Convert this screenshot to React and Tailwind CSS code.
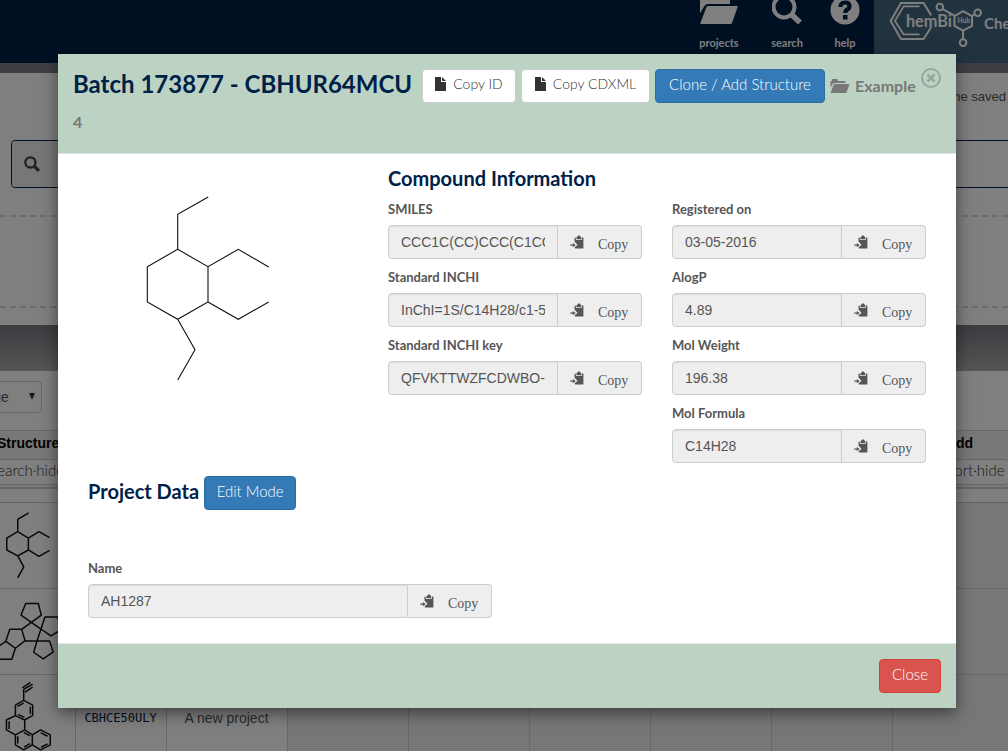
import React from "react";

const brandFont = "font-['Lato','Open_Sans',sans-serif]";
const bodyFont = "font-['Liberation_Sans',Arial,sans-serif]";

function FolderIcon({ className }) {
  return (
    <svg viewBox="0 0 38 28" className={className} fill="currentColor" aria-hidden="true">
      <path d="M0 17 V4 H3 V1.500 Q3 0 4.500 0 H13 Q14.500 0 14.500 1.500 V4 H30 V8 H8 Q5.500 8 4.500 10 Z" />
      <path d="M8.500 10 H37 Q38 10 37.700 11 L32 27 Q31.600 28 30.500 28 H1 Q0 28 0.400 27 L6.500 11 Q7 10 8.500 10 Z" />
    </svg>
  );
}

function FileIcon() {
  return (
    <svg viewBox="0 0 12 14" className="h-3.5 w-3 shrink-0" fill="currentColor" aria-hidden="true">
      <path d="M0 0 H6 V5 H11 V14 H0 Z" />
      <path d="M7 0 L11 4 H7 Z" />
    </svg>
  );
}

function PasteIcon() {
  return (
    <svg viewBox="0 0 14 14" className="h-3.5 w-3.5 shrink-0" fill="currentColor" aria-hidden="true">
      <path d="M7.500 1.500 Q9 -0.800 10 1 L11.300 2.200 L11 4.300 L6.500 4.300 L6.300 2.600 Z" />
      <path d="M4.500 2.800 L5.600 2.600 L6 5 H11.600 L12 2.400 H13.400 V13.400 H5.200 L4.500 12.300 L7.600 9.900 L4.500 6.400 Z" />
      <path d="M0.300 9.500 H2.800 V7.900 L5.700 10.100 L2.800 12.300 V10.700 H0.300 Z" />
    </svg>
  );
}

function SearchIcon({ className }) {
  return (
    <svg viewBox="0 0 30 30" className={className} fill="none" stroke="currentColor" aria-hidden="true">
      <circle cx="12" cy="12" r="9.500" strokeWidth="4.500" />
      <path d="M19 19 L28 28" strokeWidth="6" />
    </svg>
  );
}

function NavItem({ label, width, children }) {
  return (
    <a href="#" className={`flex flex-col items-center ${width}`}>
      <span className="flex h-9 items-start">{children}</span>
      <span className="text-[11px] leading-[14px] font-bold">{label}</span>
    </a>
  );
}

function Logo() {
  return (
    <svg viewBox="682 0 292 144" className="h-12 w-[97px] shrink-0" fill="none" stroke="white" strokeWidth="6" role="img" aria-label="ChemBio Hub">
      <path d="M815 46 L792 9 H724 L693 63 L724 117 H792 L815 82" />
      <path d="M780 19 H732 L706 63 L732 103 H780" strokeWidth="5" />
      <path d="M911 33 L938 48 V78 L911 92 L885 78 V48 Z" />
      <circle cx="841" cy="21" r="10" />
      <circle cx="955" cy="38" r="10" />
      <circle cx="911" cy="128" r="10" />
      <path d="M850 27 L885 47 M946 43 L938 48 M911 92 V118" />
      <g fill="white" stroke="none" className="font-['Lato',sans-serif] font-bold">
        <text x="739" y="80" fontSize="49">hemBi</text>
        <text x="894" y="70" fontSize="20">Hub</text>
      </g>
    </svg>
  );
}

function TopBar() {
  return (
    <header className={`flex h-[63px] justify-end bg-[#002147] text-white ${brandFont}`}>
      <nav className="flex">
        <NavItem label="projects" width="w-[68px]">
          <svg viewBox="0 0 38 24" className="h-6 w-[38px]" fill="currentColor" aria-hidden="true">
            <path d="M0 13 V0 H30 V4 H8 Q5.500 4 4.500 6 Z" />
            <path d="M8.500 6 H37 Q38 6 37.700 7 L32 23 Q31.600 24 30.500 24 H1 Q0 24 0.400 23 L6.500 7 Q7 6 8.500 6 Z" />
          </svg>
        </NavItem>
        <NavItem label="search" width="w-[68px]">
          <svg viewBox="0 5 30 25" className="h-[25px] w-[30px]" fill="none" stroke="currentColor" aria-hidden="true">
            <circle cx="12" cy="12" r="10.500" strokeWidth="4" />
            <path d="M19.500 19.500 L28 27.500" strokeWidth="5.500" />
          </svg>
        </NavItem>
        <NavItem label="help" width="w-[48px]">
          <svg viewBox="0 5 30 25" className="h-[25px] w-[30px]" aria-hidden="true">
            <circle cx="15" cy="15" r="14.500" fill="currentColor" />
            <path d="M10.500 12 Q10.500 7.500 15.200 7.500 Q19.500 7.500 19.500 11.200 Q19.500 13.300 17.300 14.500 Q15.300 15.500 15.300 18" fill="none" stroke="#002147" strokeWidth="4.200" />
            <rect x="13" y="20" width="4.500" height="4.500" fill="#002147" />
          </svg>
        </NavItem>
      </nav>
      <div className="ml-[5px] flex w-[134px] overflow-hidden bg-[#446680] pl-[13px]">
        <Logo />
        <span className="text-[15px] leading-[46px] font-bold whitespace-nowrap">ChemReg</span>
      </div>
    </header>
  );
}

const cell = "border-r border-b border-[#d0d0d0] p-0";

function Drawing({ top, paths }) {
  return (
    <svg viewBox={`-138 ${top} 363 255`} className="block h-[85px] w-full" fill="none" stroke="#111" strokeWidth="4.500" strokeLinejoin="round">
      <path d={paths} />
    </svg>
  );
}

const drawings = [
  "M87 578 L54 598 V635 L86 654 L118 635 L150 653 M54 635 L21 654 V690 L54 708 L86 690 V654 M86 690 L118 709 L150 691 M54 708 L72 741 L54 774",
  "M78 850 H116 L125 885 L95 907 L64 885 Z M124 927 L136 891 H175 L184 930 L154 948 Z M112 963 H150 L161 996 L131 1017 L102 997 Z M95 907 L66 928 L76 962 L112 963 L124 927 Z M66 928 H30 L18 964 L47 985 L76 962 M47 985 L36 1018 H0 L-12 985 L18 964",
  "M72 1141 V1108 L99 1092 M68 1103 L92 1087 M76 1116 L99 1101 M72 1141 L99 1155 V1186 L75 1200 L47 1187 V1155 Z M75 1200 V1230 L47 1245 L20 1230 V1200 L47 1187 M75 1230 L98 1245 V1275 L72 1290 L47 1275 V1245 M98 1245 L123 1230 L152 1245 V1275 L123 1290 L98 1275 M53 1159 L72 1149 M92 1160 V1182 M74 1192 L55 1183 M28 1204 V1227 M72 1237 L91 1248 M54 1249 V1271 M73 1282 L91 1271 M123 1238 L144 1249 M144 1272 L124 1282",
];

function CompoundTable() {
  const columns = ["Structure", "", "", "", "", "", "", "", "ldd"];
  const ids = [
    ["CBHUR64MCU", "Example 4"],
    ["CBHQK27PTA", "A new project"],
    ["CBHCE50ULY", "A new project"],
  ];
  return (
    <table className="-ml-[46px] w-[1059px] table-fixed border-collapse border-t border-[#d0d0d0]">
      <colgroup>
        <col className="w-[121px]" />
        <col className="w-[91px]" />
        {[0, 1, 2, 3, 4, 5].map((i) => (
          <col key={i} className="w-[121px]" />
        ))}
        <col className="w-[121px]" />
      </colgroup>
      <thead>
        <tr className="bg-[#f0f0f0]">
          {columns.map((c, i) => (
            <th key={i} className={`h-[57px] border-b-2 border-[#d0d0d0] p-0 text-left align-top text-sm font-bold text-black ${i === 8 ? "pl-0.5" : ""}`}>
              <span className={`block h-7 leading-6 ${i === 8 ? "pl-[58px]" : "pl-[43px]"}`}>{c}</span>
              <button
                type="button"
                className={`block h-[26px] rounded border border-[#ccc] bg-white pb-1 text-left text-[15px] leading-5 font-light text-[#333] ${brandFont} ${i === 8 ? "w-[115px] pl-[53px]" : "w-full pl-[36px]"}`}
              >
                {i === 8 ? "sort·hide" : "search·hide"}
              </button>
            </th>
          ))}
        </tr>
      </thead>
      <tbody>
        <tr>
          <td colSpan={9} className="h-[15px] border-b border-[#c8c8d0] p-0" />
        </tr>
        {ids.map(([id, project], row) => (
          <tr key={id}>
            <td className={cell}>
              <Drawing top={549 + 258 * row} paths={drawings[row]} />
            </td>
            <td className={`${cell} text-center font-['DejaVu_Sans_Mono',monospace] text-xs text-[#002147]`}>{id}</td>
            <td className={`${cell} text-center text-sm text-[#555]`}>{project}</td>
            {[0, 1, 2, 3, 4, 5].map((i) => (
              <td key={i} className={`${cell} bg-[#eee]`} />
            ))}
          </tr>
        ))}
      </tbody>
    </table>
  );
}

function Page() {
  return (
    <div className="h-full overflow-hidden bg-white">
      <TopBar />
      <div className="h-2.5 bg-[#7a7e88]" />
      <section className="h-[252px]">
        <p className="pt-3.5 pr-0.5 text-right text-[13px] leading-5 text-[#555]">the saved</p>
        <label className="-mr-5 mt-[33px] ml-[11px] flex h-12 rounded border border-[#002147]">
          <span className="flex w-[60px] items-center rounded-l bg-[#eee] pl-3 text-[#444]">
            <SearchIcon className="h-4 w-4" />
          </span>
          <input aria-label="Search compounds" className="min-w-0 flex-1 outline-none" />
        </label>
        <div className="mt-[27px] h-[93px] border-y-2 border-dashed border-[#d6d6d6]" />
      </section>
      <div className="h-[46px] bg-linear-to-b from-[#787a82] to-[#acacac]" />
      <div className="flex h-[59px] pt-2.5">
        <label className="relative -ml-[80px] block h-8 w-[122px]">
          <select aria-label="Rows per page" className="h-8 w-full appearance-none rounded border border-[#ccc] bg-white pl-[13px] text-sm text-[#555]">
            <option>20 per page</option>
          </select>
          <svg viewBox="0 0 6 7" className="absolute top-3 right-[7px] h-[7px] w-1.5" fill="#333" aria-hidden="true">
            <path d="M0 0 H6 L3 7 Z" />
          </svg>
        </label>
      </div>
      <CompoundTable />
    </div>
  );
}

function CopyField({ id, label, value }) {
  return (
    <div>
      <label htmlFor={id} className={`mb-2 block text-[13px] leading-4 font-bold text-[#555] ${brandFont}`}>
        {label}
      </label>
      <div className="flex h-[34px]">
        <input
          id={id}
          readOnly
          defaultValue={value}
          className="min-w-0 flex-1 rounded-l border border-[#ccc] bg-[#eee] px-3 text-sm text-[#555] shadow-[inset_0_1px_1px_rgba(0,0,0,0.075)]"
        />
        <button
          type="button"
          className="flex w-[84px] items-center gap-3.5 rounded-r border border-l-0 border-[#ccc] bg-[#eee] pl-3 font-['Liberation_Serif',serif] text-sm text-[#555]"
        >
          <PasteIcon />
          <span className="pt-1.5">Copy</span>
        </button>
      </div>
    </div>
  );
}

function Button({ tone, width, children }) {
  return (
    <button
      type="button"
      className={`flex h-[34px] shrink-0 items-center justify-center gap-1.5 rounded border pb-1 leading-5 font-light whitespace-nowrap ${brandFont} ${tone} ${width}`}
    >
      {children}
    </button>
  );
}

const plain = "border-[#ccc] bg-white text-sm text-[#333]";
const primary = "border-[#2e6da4] bg-[#337ab7] text-[15px] text-white";
const danger = "border-[#d43f3a] bg-[#d9534f] text-[15px] text-white";

function BatchDialog() {
  return (
    <div role="dialog" aria-modal="true" aria-labelledby="batch-title" className="w-[898px] max-w-full bg-white shadow-[0_5px_15px_rgba(0,0,0,0.5)]">
      <div className={`relative border-b border-[#e5e5e5] bg-[#bcd3c3] px-[15px] pt-[15px] pb-5 ${brandFont}`}>
        <div className="flex items-start gap-[5px]">
          <h2 id="batch-title" className="w-[344px] shrink-0 text-2xl leading-[30px] font-bold whitespace-nowrap text-[#002147]">
            Batch 173877 - CBHUR64MCU
          </h2>
          <Button tone={plain} width="w-[94px]">
            <FileIcon />
            Copy ID
          </Button>
          <Button tone={plain} width="w-[129px]">
            <FileIcon />
            Copy CDXML
          </Button>
          <Button tone={primary} width="w-[170px]">Clone / Add Structure</Button>
          <span className="flex h-[34px] items-center gap-[5px] text-base font-bold text-[#777]">
            <FolderIcon className="h-3.5 w-5" />
            Example
          </span>
        </div>
        <p className="pt-2 text-base leading-[22px] font-bold text-[#777]">4</p>
        <button type="button" aria-label="Close dialog" className="absolute top-3.5 right-[15px] text-[#95a89b]">
          <svg viewBox="0 0 20 20" className="block h-5 w-5" fill="none" stroke="currentColor">
            <circle cx="10" cy="10" r="9" strokeWidth="2" />
            <path d="M6.500 6.500 L13.500 13.500 M13.500 6.500 L6.500 13.500" strokeWidth="2.600" />
          </svg>
        </button>
      </div>
      <div className="px-[30px] pt-3 pb-[25px]">
        <div className="grid grid-cols-[270px_1fr] gap-x-[30px]">
          <svg viewBox="88 166 270 240" className="h-[240px] w-[270px]" fill="none" stroke="#111" strokeWidth="1.100" role="img" aria-label="Compound structure">
            <path d="M208.200 197 L177.700 214.300 V249.300 L208 266.700 L238.300 249.300 L268.700 267 M177.700 249.300 L147.300 266.700 V302 L177.700 319.300 L208 302 V266.700 M208 302 L238.300 319.300 L268.700 302 M177.700 319.300 L195 349.700 L177.700 380" />
          </svg>
          <div>
            <h3 className={`mb-[11px] text-xl leading-6 font-bold text-[#002147] ${brandFont}`}>Compound Information</h3>
            <div className="grid grid-cols-2 gap-x-[30px]">
              <div className="flex flex-col gap-2.5">
                <CopyField id="smiles" label="SMILES" value="CCC1C(CC)CCC(C1CC)CC" />
                <CopyField id="inchi" label="Standard INCHI" value="InChI=1S/C14H28/c1-5-11-9-10" />
                <CopyField id="inchi-key" label="Standard INCHI key" value="QFVKTTWZFCDWBO-UHFFFAOYSA-N" />
              </div>
              <div className="flex flex-col gap-2.5">
                <CopyField id="registered" label="Registered on" value="03-05-2016" />
                <CopyField id="alogp" label="AlogP" value="4.89" />
                <CopyField id="weight" label="Mol Weight" value="196.38" />
                <CopyField id="formula" label="Mol Formula" value="C14H28" />
              </div>
            </div>
          </div>
        </div>
        <div className="mt-[13px] mb-[50px] flex gap-[5px]">
          <h3 className={`text-xl leading-[30px] font-bold text-[#002147] ${brandFont}`}>Project Data</h3>
          <Button tone={primary} width="w-[92px]">Edit Mode</Button>
        </div>
        <div className="w-[404px]">
          <CopyField id="name" label="Name" value="AH1287" />
        </div>
      </div>
      <div className="flex justify-end border-t border-[#e5e5e5] bg-[#bcd3c3] p-[15px]">
        <Button tone={danger} width="w-[62px]">Close</Button>
      </div>
    </div>
  );
}

export default function App() {
  return (
    <div className={`relative h-screen overflow-hidden ${bodyFont}`}>
      <Page />
      <div className="absolute inset-0 flex items-start justify-center bg-black/50 pt-[54px] pl-1.5">
        <BatchDialog />
      </div>
    </div>
  );
}
